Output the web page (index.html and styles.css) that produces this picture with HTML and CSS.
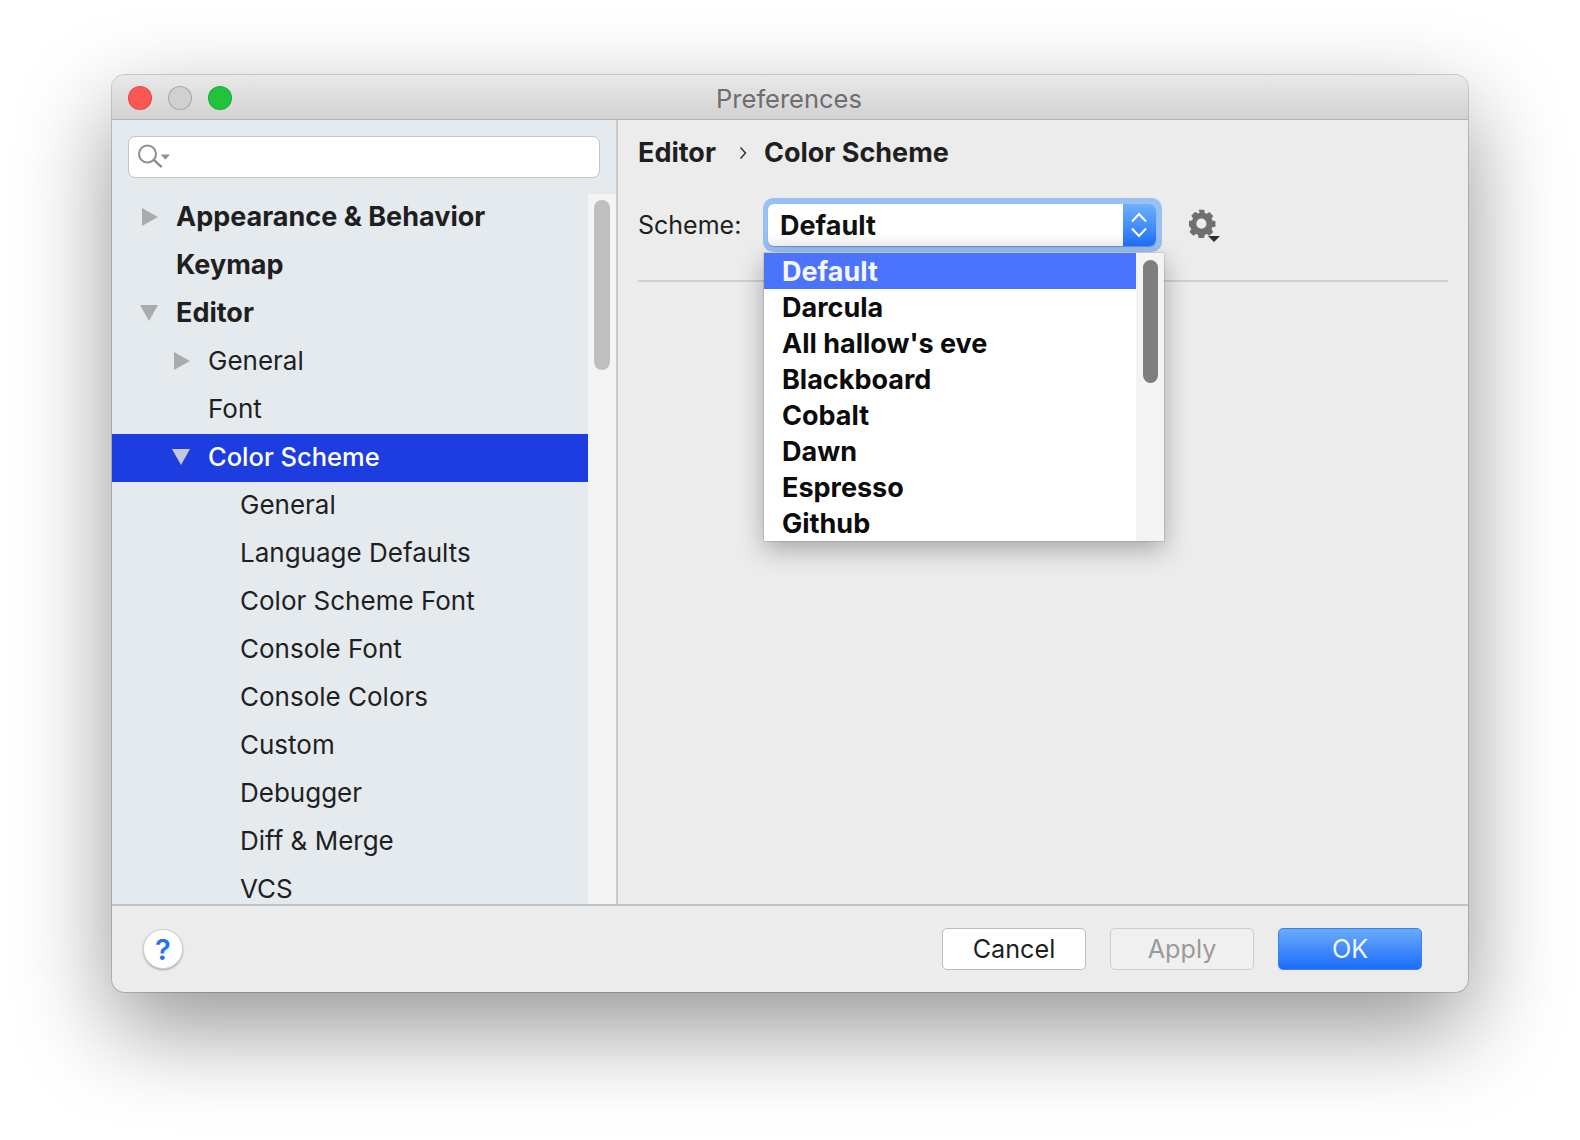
FILE: index.html
```html
<!DOCTYPE html>
<html lang="en">
<head>
<meta charset="utf-8">
<title>Preferences</title>
<link rel="stylesheet" href="styles.css">
</head>
<body>
<div class="window">
  <header class="titlebar">
    <div class="lights">
      <span class="light red"></span>
      <span class="light gray"></span>
      <span class="light green"></span>
    </div>
    <div class="title">Preferences</div>
  </header>
  <div class="main">
    <aside class="sidebar">
      <div class="search-wrap">
        <div class="search">
          <svg class="search-icon" width="34" height="26" viewBox="0 0 34 26">
            <circle cx="11.500" cy="10" r="8.500" fill="none" stroke="#8a9096" stroke-width="2"/>
            <path d="M17.700 15.800l8 7.400" fill="none" stroke="#8a9096" stroke-width="2.500"/>
            <path d="M24.700 10.500h9.300l-4.650 5.300z" fill="#8f9499"/>
          </svg>
        </div>
      </div>
      <div class="tree-area">
        <nav class="tree">
          <div class="row bold"><svg class="arrow" width="18" height="18" viewBox="0 0 18 18"><path d="M2 0l16 9-16 9z"/></svg><span>Appearance &amp; Behavior</span></div>
          <div class="row bold"><span class="no-arrow"></span><span>Keymap</span></div>
          <div class="row bold"><svg class="arrow" width="18" height="18" viewBox="0 0 18 18"><path d="M0 1h18l-9 16z"/></svg><span>Editor</span></div>
          <div class="row lvl1"><svg class="arrow" width="18" height="18" viewBox="0 0 18 18"><path d="M2 0l16 9-16 9z"/></svg><span>General</span></div>
          <div class="row lvl1"><span class="no-arrow"></span><span>Font</span></div>
          <div class="row lvl1 selected"><svg class="arrow" width="18" height="18" viewBox="0 0 18 18"><path d="M0 1h18l-9 16z"/></svg><span>Color Scheme</span></div>
          <div class="row lvl2">General</div>
          <div class="row lvl2">Language Defaults</div>
          <div class="row lvl2">Color Scheme Font</div>
          <div class="row lvl2">Console Font</div>
          <div class="row lvl2">Console Colors</div>
          <div class="row lvl2">Custom</div>
          <div class="row lvl2">Debugger</div>
          <div class="row lvl2">Diff &amp; Merge</div>
          <div class="row lvl2">VCS</div>
        </nav>
        <div class="track"><div class="thumb"></div></div>
      </div>
    </aside>
    <section class="content">
      <div class="crumbs">
        <span>Editor</span>
        <svg class="crumb-sep" width="8" height="14" viewBox="0 0 8 14"><path d="M1.500 1.500l5 5.500-5 5.500" fill="none" stroke="#333" stroke-width="1.500"/></svg>
        <span>Color Scheme</span>
      </div>
      <div class="scheme-row">
        <label class="scheme-label">Scheme:</label>
        <div class="combo-glow">
          <div class="combo">
            <span class="combo-text">Default</span>
            <span class="combo-btn">
              <svg width="18" height="30" viewBox="0 0 18 30"><path d="M2 11.500L9 4l7 7.500M2 18.500L9 26l7-7.500" fill="none" stroke="#fff" stroke-width="2"/></svg>
            </span>
          </div>
        </div>
        <svg class="gear" width="36" height="36" viewBox="0 0 36 36">
          <g fill="#707070">
            <path fill-rule="evenodd" d="M11 2h6l.7 3.400 2.100.9 2.900-1.900 4.200 4.200-1.900 2.900.9 2.100 3.400.7v6l-3.400.7-.9 2.100 1.900 2.900-4.200 4.200-2.900-1.900-2.100.9-.7 3.400h-6l-.7-3.400-2.100-.9-2.900 1.900-4.200-4.200 1.900-2.900-.9-2.100L.6 20v-6l3.400-.7.9-2.100L3 8.300l4.200-4.200 2.900 1.900 2.100-.9zM14 11.500a5.500 5.500 0 1 0 0 11 5.500 5.500 0 0 0 0-11z" transform="translate(.5 -1) scale(.92)"/>
          </g>
          <path d="M20 27h12l-6 6z" fill="#2e2e2e"/>
        </svg>
      </div>
      <div class="separator"></div>
    </section>
  </div>
  <footer class="footer">
    <button class="help">?</button>
    <div class="actions">
      <button class="btn">Cancel</button>
      <button class="btn disabled">Apply</button>
      <button class="btn primary">OK</button>
    </div>
  </footer>
  <div class="popup">
    <ul class="popup-list">
      <li class="active">Default</li>
      <li>Darcula</li>
      <li>All hallow's eve</li>
      <li>Blackboard</li>
      <li>Cobalt</li>
      <li>Dawn</li>
      <li>Espresso</li>
      <li>Github</li>
    </ul>
    <div class="popup-track"><div class="popup-thumb"></div></div>
  </div>
</div>
</body>
</html>
```
FILE: styles.css
```css
* { box-sizing: border-box; }
html, body { margin: 0; height: 100%; }
body {
  width: 1580px;
  height: 1140px;
  overflow: hidden;
  background: #fff;
  padding: 75px 0 0 112px;
  font-family: Inter, "Liberation Sans", sans-serif;
  color: #1f1f1f;
}
.window {
  position: relative;
  width: 1356px;
  height: 917px;
  display: flex;
  flex-direction: column;
  background: #ececec;
  border-radius: 13px;
  box-shadow: 0 0 0 1px rgba(0,0,0,.17), 0 36px 95px rgba(0,0,0,.42);
}
.titlebar {
  position: relative;
  height: 45px;
  flex: none;
  background: linear-gradient(#e9e9e9, #d2d2d2);
  border-bottom: 1px solid #b4b4b4;
  border-radius: 13px 13px 0 0;
  display: flex;
  align-items: center;
  justify-content: center;
}
.lights {
  position: absolute;
  left: 16px;
  top: 11px;
  display: flex;
  gap: 16px;
}
.light {
  width: 24px;
  height: 24px;
  border-radius: 50%;
  border: 1px solid rgba(0,0,0,.12);
}
.red { background: #fc5753; }
.gray { background: #d0d0d0; border-color: rgba(0,0,0,.2); }
.green { background: #1fc43c; }
.title {
  font-size: 25.500px;
  color: #6e6e6e;
  margin-left: -2px;
  margin-top: 2px;
}
.main {
  flex: 1;
  min-height: 0;
  display: flex;
}
.sidebar {
  width: 506px;
  flex: none;
  display: flex;
  flex-direction: column;
  background: #e5eaef;
  border-right: 2px solid #c8c8c8;
}
.search-wrap {
  height: 74px;
  flex: none;
  padding: 16px 16px 0;
}
.search {
  height: 42px;
  width: 472px;
  background: #fff;
  border: 1.500px solid #c2c6ca;
  border-radius: 7px;
  display: flex;
  align-items: center;
  padding-left: 7px;
}
.tree-area {
  flex: 1;
  min-height: 0;
  display: flex;
}
.tree {
  flex: 1;
  min-width: 0;
  overflow: hidden;
}
.row {
  height: 48px;
  display: flex;
  align-items: center;
  font-size: 26px;
  white-space: nowrap;
  padding: 0 0 4px 28px;
}
.row .arrow { flex: none; fill: #ababab; margin: 2px 18px 0 0; }
.row .no-arrow { flex: none; width: 18px; margin-right: 18px; }
.bold { font-weight: 700; font-size: 27px; }
.lvl1 { padding-left: 60px; }
.lvl2 { padding-left: 128px; }
.selected { background: #1d3de0; color: #fff; font-size: 25.500px; font-weight: 500; }
.selected .arrow { fill: #c3c9dc; }
.track {
  width: 28px;
  flex: none;
  background: #f4f4f4;
  padding: 6px 6px 0;
}
.thumb {
  width: 16px;
  height: 170px;
  border-radius: 8px;
  background: #bfbfbf;
}
.content {
  flex: 1;
  min-width: 0;
  padding: 0 20px;
}
.crumbs {
  display: flex;
  align-items: center;
  height: 65px;
  font-size: 27px;
  font-weight: 700;
}
.crumb-sep { margin: 0 17px 0 23px; }
.scheme-row {
  display: flex;
  align-items: center;
  height: 54px;
  margin-top: 13px;
}
.scheme-label {
  font-size: 25px;
  width: 125px;
  flex: none;
}
.combo-glow {
  width: 399px;
  height: 54px;
  flex: none;
  border-radius: 10px;
  background: #98c0f5;
  padding: 6px 6px 6px 5px;
}
.combo {
  height: 42px;
  display: flex;
  border-radius: 6px;
  overflow: hidden;
  background: linear-gradient(#fff 70%, #f2f2f2);
  box-shadow: 0 1px 1px rgba(0,0,0,.25);
}
.combo-text {
  flex: 1;
  font-size: 27px;
  font-weight: 700;
  color: #111;
  line-height: 44px;
  padding-left: 12px;
}
.combo-btn {
  width: 33px;
  flex: none;
  background: linear-gradient(#6fb0fa, #1f6ffb);
  display: flex;
  align-items: center;
  justify-content: center;
  padding-right: 2px;
}
.gear { margin-left: 26px; flex: none; margin-top: 4px; }
.separator {
  height: 2px;
  background: #d0d0d0;
  margin-top: 28px;
}
.footer {
  height: 88px;
  flex: none;
  border-top: 2px solid #c2c2c2;
  display: flex;
  align-items: center;
  justify-content: space-between;
  padding: 0 46px 0 31px;
}
.help {
  width: 40px;
  height: 40px;
  padding: 0;
  border-radius: 50%;
  border: 1px solid #d2d2d2;
  background: #fff;
  box-shadow: 0 1px 2px rgba(0,0,0,.3);
  color: #1f72fb;
  font: 600 29px Inter, "Liberation Sans", sans-serif;
}
.actions { display: flex; gap: 24px; }
.btn {
  width: 144px;
  height: 42px;
  padding: 0;
  border-radius: 5px;
  border: 1px solid #bcbcbc;
  background: #fff;
  color: #1f1f1f;
  font: 400 25.200px Inter, "Liberation Sans", sans-serif;
}
.btn.disabled {
  background: #f0f0f0;
  border-color: #cdcdcd;
  color: #9a9a9a;
}
.btn.primary {
  background: linear-gradient(#6aabfb, #1b6cfb);
  border-color: #3a80f0;
  color: #f2f6fe;
}
.popup {
  position: absolute;
  left: 652px;
  top: 178px;
  width: 400px;
  height: 288px;
  display: flex;
  background: #fff;
  overflow: hidden;
  box-shadow: 0 0 1px rgba(0,0,0,.6), 0 8px 24px rgba(0,0,0,.3);
}
.popup-list {
  flex: 1;
  min-width: 0;
  margin: 0;
  padding: 0;
  list-style: none;
}
.popup-list li {
  height: 36px;
  line-height: 38px;
  padding-left: 18px;
  font-size: 27px;
  font-weight: 700;
  color: #0c0c0c;
  white-space: nowrap;
}
.popup-list li.active { background: #4c73fb; color: #f5f7ff; }
.popup-track {
  width: 28px;
  flex: none;
  background: #f4f4f4;
  padding: 7px 6px 0 7px;
}
.popup-thumb {
  height: 123px;
  border-radius: 8px;
  background: #7e7e7e;
}
```
